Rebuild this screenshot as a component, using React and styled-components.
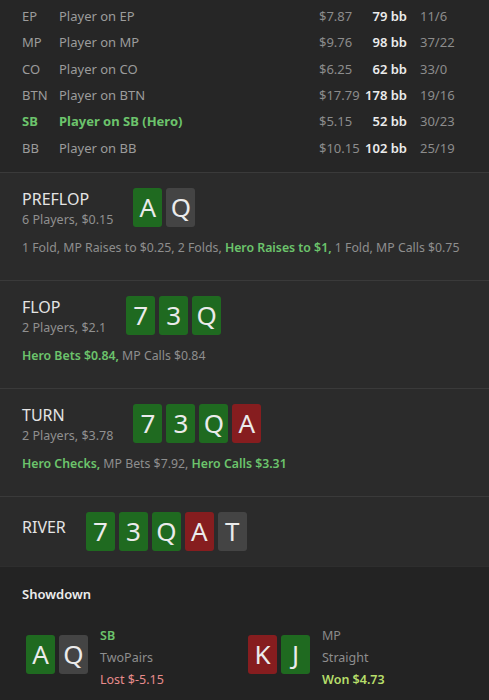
import React from "react";
import styled, { createGlobalStyle } from "styled-components";

const GlobalStyle = createGlobalStyle`
  html, body {
    margin: 0;
    padding: 0;
    background: #262626;
  }
  body {
    font-family: "Noto Sans", "Open Sans", sans-serif;
    -webkit-font-smoothing: antialiased;
  }
`;

const Page = styled.div`
  width: 489px;
  min-height: 700px;
  background: #262626;
  color: #d8d8d8;
  overflow: hidden;
`;

// Players table
const PlayersTable = styled.div`
  padding: 3px 0 11px 22px;
`;

const PlayerRow = styled.div`
  display: grid;
  grid-template-columns: 37px 260px 41px 47px auto;
  align-items: center;
  height: 26.3px;
  font-size: 13px;
  color: ${(p) => (p.$hero ? "#6cc46c" : "#9c9c9c")};
  font-weight: ${(p) => (p.$hero ? 700 : 400)};
`;

const Money = styled.span`
  color: #8c8c8c;
  font-weight: 400;
`;

const Stack = styled.span`
  color: #ececec;
  font-weight: 600;
  text-align: right;
`;

const Ratio = styled.span`
  color: #8c8c8c;
  font-weight: 400;
  padding-left: 13px;
`;

// Streets
const Street = styled.section`
  border-top: 1px solid #3a3a3a;
  background: #2b2b2b;
  padding: 15px 22px ${(p) => (p.$last ? "15px" : "23px")};
`;

const StreetHead = styled.div`
  display: flex;
  align-items: center;
  gap: 20px;
  height: 39px;
`;

const StreetTitle = styled.div`
  display: flex;
  flex-direction: column;
  justify-content: center;
  align-self: ${(p) => (p.$top ? "flex-start" : "center")};
  padding-top: 4px;
`;

const StreetName = styled.div`
  font-size: 16px;
  color: #e4e4e4;
  line-height: 22px;
`;

const StreetInfo = styled.div`
  font-size: 12.5px;
  color: #909090;
  line-height: 20px;
`;

const Cards = styled.div`
  display: flex;
  gap: 4px;
`;

const suitColors = {
  g: "#1f6a20",
  r: "#861d1f",
  n: "#444444",
};

const Card = styled.div`
  width: 29px;
  height: 39px;
  border-radius: 3px;
  background: ${(p) => suitColors[p.$suit]};
  color: #ebebeb;
  font-size: 26px;
  line-height: 39px;
  text-align: center;
`;

const Actions = styled.div`
  margin-top: 12px;
  font-size: 12.3px;
  color: #8e8e8e;
  line-height: 18px;
`;

const HeroAction = styled.span`
  color: #6cc46c;
  font-weight: 600;
`;

// Showdown
const Showdown = styled.section`
  border-top: 1px solid #2e2e2e;
  background: #232323;
  padding: 17px 0 20px 22px;
`;

const ShowdownTitle = styled.div`
  font-size: 13px;
  font-weight: 600;
  color: #ececec;
  line-height: 20px;
`;

const Hands = styled.div`
  display: grid;
  grid-template-columns: 222px 222px;
  margin-top: 15px;
  padding-left: 4px;
`;

const Hand = styled.div`
  display: flex;
  align-items: center;
  gap: 12px;
`;

const HandInfo = styled.div`
  display: flex;
  flex-direction: column;
  font-size: 12.5px;
  line-height: 22px;
  padding-top: 6px;
`;

const Seat = styled.span`
  color: ${(p) => (p.$hero ? "#6cc46c" : "#8a8a8a")};
  font-weight: ${(p) => (p.$hero ? 600 : 400)};
`;

const HandName = styled.span`
  color: #8e8e8e;
`;

const Result = styled.span`
  color: ${(p) => (p.$won ? "#b6de6a" : "#e88c8c")};
  font-weight: ${(p) => (p.$won ? 600 : 400)};
`;

const players = [
  ["EP", "Player on EP", "$7.87", "79 bb", "11/6"],
  ["MP", "Player on MP", "$9.76", "98 bb", "37/22"],
  ["CO", "Player on CO", "$6.25", "62 bb", "33/0"],
  ["BTN", "Player on BTN", "$17.79", "178 bb", "19/16"],
  ["SB", "Player on SB (Hero)", "$5.15", "52 bb", "30/23", true],
  ["BB", "Player on BB", "$10.15", "102 bb", "25/19"],
];

const CardList = ({ cards }) => (
  <Cards>
    {cards.map(([rank, suit], i) => (
      <Card key={i} $suit={suit}>
        {rank}
      </Card>
    ))}
  </Cards>
);

export default function App() {
  return (
    <Page>
      <GlobalStyle />
      <PlayersTable>
        {players.map(([pos, name, money, stack, ratio, hero]) => (
          <PlayerRow key={pos} $hero={hero}>
            <span>{pos}</span>
            <span>{name}</span>
            <Money>{money}</Money>
            <Stack>{stack}</Stack>
            <Ratio>{ratio}</Ratio>
          </PlayerRow>
        ))}
      </PlayersTable>

      <Street>
        <StreetHead>
          <StreetTitle>
            <StreetName>PREFLOP</StreetName>
            <StreetInfo>6 Players, $0.15</StreetInfo>
          </StreetTitle>
          <CardList cards={[["A", "g"], ["Q", "n"]]} />
        </StreetHead>
        <Actions>
          1 Fold, MP Raises to $0.25, 2 Folds, <HeroAction>Hero Raises to $1,</HeroAction> 1 Fold, MP Calls $0.75
        </Actions>
      </Street>

      <Street>
        <StreetHead>
          <StreetTitle>
            <StreetName>FLOP</StreetName>
            <StreetInfo>2 Players, $2.1</StreetInfo>
          </StreetTitle>
          <CardList cards={[["7", "g"], ["3", "g"], ["Q", "g"]]} />
        </StreetHead>
        <Actions>
          <HeroAction>Hero Bets $0.84,</HeroAction> MP Calls $0.84
        </Actions>
      </Street>

      <Street>
        <StreetHead>
          <StreetTitle>
            <StreetName>TURN</StreetName>
            <StreetInfo>2 Players, $3.78</StreetInfo>
          </StreetTitle>
          <CardList cards={[["7", "g"], ["3", "g"], ["Q", "g"], ["A", "r"]]} />
        </StreetHead>
        <Actions>
          <HeroAction>Hero Checks,</HeroAction> MP Bets $7.92, <HeroAction>Hero Calls $3.31</HeroAction>
        </Actions>
      </Street>

      <Street $last>
        <StreetHead>
          <StreetTitle $top>
            <StreetName>RIVER</StreetName>
          </StreetTitle>
          <CardList cards={[["7", "g"], ["3", "g"], ["Q", "g"], ["A", "r"], ["T", "n"]]} />
        </StreetHead>
      </Street>

      <Showdown>
        <ShowdownTitle>Showdown</ShowdownTitle>
        <Hands>
          <Hand>
            <CardList cards={[["A", "g"], ["Q", "n"]]} />
            <HandInfo>
              <Seat $hero>SB</Seat>
              <HandName>TwoPairs</HandName>
              <Result>Lost $-5.15</Result>
            </HandInfo>
          </Hand>
          <Hand>
            <CardList cards={[["K", "r"], ["J", "g"]]} />
            <HandInfo>
              <Seat>MP</Seat>
              <HandName>Straight</HandName>
              <Result $won>Won $4.73</Result>
            </HandInfo>
          </Hand>
        </Hands>
      </Showdown>
    </Page>
  );
}
